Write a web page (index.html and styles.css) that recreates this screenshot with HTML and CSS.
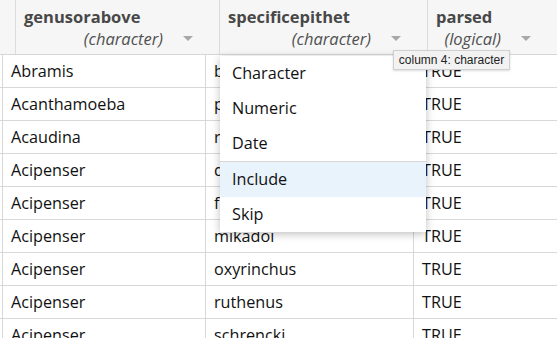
FILE: index.html
```html
<!DOCTYPE html>
<html lang="en">
<head>
  <meta charset="UTF-8" />
  <title>Data Preview</title>
  <link rel="stylesheet" href="styles.css">
</head>
<body>
  <div class="preview">
    <div class="head-row">
      <div class="head-cell stub"></div>
      <div class="head-cell">
        <div class="col-name">genusorabove</div>
        <div class="col-type">(character) <span class="caret"></span></div>
      </div>
      <div class="head-cell">
        <div class="col-name">specificepithet</div>
        <div class="col-type">(character) <span class="caret"></span></div>
      </div>
      <div class="head-cell">
        <div class="col-name">parsed</div>
        <div class="col-type">(logical) <span class="caret"></span></div>
      </div>
    </div>

    <div class="body">
      <div class="row"><div class="cell stub"></div><div class="cell">Abramis</div><div class="cell">brama</div><div class="cell">TRUE</div></div>
      <div class="row"><div class="cell stub"></div><div class="cell">Acanthamoeba</div><div class="cell">polyphaga</div><div class="cell">TRUE</div></div>
      <div class="row"><div class="cell stub"></div><div class="cell">Acaudina</div><div class="cell">rosettis</div><div class="cell">TRUE</div></div>
      <div class="row"><div class="cell stub"></div><div class="cell">Acipenser</div><div class="cell">dabryanus</div><div class="cell">TRUE</div></div>
      <div class="row"><div class="cell stub"></div><div class="cell">Acipenser</div><div class="cell">fulvescens</div><div class="cell">TRUE</div></div>
      <div class="row"><div class="cell stub"></div><div class="cell">Acipenser</div><div class="cell">mikadoi</div><div class="cell">TRUE</div></div>
      <div class="row"><div class="cell stub"></div><div class="cell">Acipenser</div><div class="cell">oxyrinchus</div><div class="cell">TRUE</div></div>
      <div class="row"><div class="cell stub"></div><div class="cell">Acipenser</div><div class="cell">ruthenus</div><div class="cell">TRUE</div></div>
      <div class="row"><div class="cell stub"></div><div class="cell">Acipenser</div><div class="cell">schrencki</div><div class="cell">TRUE</div></div>
    </div>

    <ul class="type-menu">
      <li>Character</li>
      <li>Numeric</li>
      <li>Date</li>
      <li class="divider"></li>
      <li class="active">Include</li>
      <li>Skip</li>
    </ul>

    <div class="tooltip">column 4: character</div>
  </div>
</body>
</html>
```

FILE: styles.css
```css
* {
  margin: 0;
  padding: 0;
  box-sizing: border-box;
}

body {
  background: white;
  font-family: 'Open Sans', sans-serif;
  overflow: hidden;
}

.preview {
  position: relative;
  width: 557px;
  height: 338px;
  overflow: hidden;
}

.head-row {
  display: grid;
  grid-template-columns: 16px 204px 208px 1fr;
  height: 55px;
  background-color: #f6f6f6;
  border-bottom: 1px solid #d6d6d6;
}

.head-cell {
  border-right: 1px solid #dcdcdc;
  padding: 6px 0 0 8px;
  color: #484848;
}

.head-cell:last-child {
  border-right: none;
}

.col-name {
  font-weight: bold;
  font-size: 16.5px;
  line-height: 22px;
}

.col-type {
  font-style: italic;
  font-size: 16.5px;
  line-height: 22px;
  text-align: right;
  padding-right: 56px;
  position: relative;
  color: #505050;
}

.caret {
  position: absolute;
  right: 26px;
  top: 8px;
  width: 0;
  height: 0;
  border-left: 5px solid transparent;
  border-right: 5px solid transparent;
  border-top: 5px solid #a8a8a8;
}

.row {
  display: grid;
  grid-template-columns: 3px 203px 208px 1fr;
  height: 33px;
  border-bottom: 1px solid #d8d8d8;
}

.cell {
  border-right: 1px solid #d8d8d8;
  padding: 0 8px;
  font-size: 16.2px;
  line-height: 33px;
  color: #111;
  white-space: nowrap;
  overflow: hidden;
}

.cell.stub {
  padding: 0;
}

.cell:last-child {
  border-right: none;
}

.type-menu {
  position: absolute;
  left: 220px;
  top: 56px;
  width: 206px;
  list-style: none;
  background: white;
  box-shadow: 0 2px 8px rgba(0, 0, 0, 0.25);
}

.type-menu li {
  height: 35px;
  line-height: 35px;
  padding-left: 12px;
  font-size: 16.2px;
  color: #111;
}

.type-menu li.divider {
  height: 1px;
  background-color: #d8d8d8;
}

.type-menu li.active {
  background-color: #e8f3fc;
}

.tooltip {
  position: absolute;
  left: 393px;
  top: 50px;
  width: 117px;
  height: 20px;
  background: #f2f2f2;
  border: 1px solid #d0d0d0;
  box-shadow: 0 1px 2px rgba(0, 0, 0, 0.15);
  font-family: 'Liberation Sans', sans-serif;
  font-size: 12px;
  line-height: 18px;
  text-align: center;
  color: #222;
}
```
